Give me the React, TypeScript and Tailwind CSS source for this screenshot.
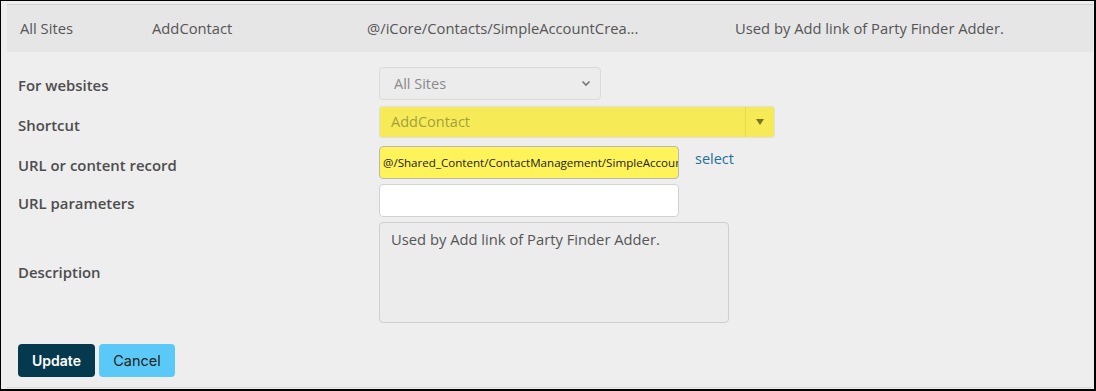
export default function App() {
  const label = "w-[361px] shrink-0 text-[14.9px] font-semibold text-[#4d4d4d]";
  return (
    <div
      className="w-[1096px] h-[391px] overflow-hidden border-l border-t border-b-2 border-r-2 border-black bg-[#eeeeee] pl-[6px] pr-[1px] pt-[3px] flex flex-col"
      style={{ fontFamily: '"Open Sans", "Liberation Sans", sans-serif' }}
    >
      {/* summary row */}
      <div className="h-[48px] shrink-0 border-t border-[#cfcfcf] bg-[#e6e6e6] flex items-center text-[14.75px] text-[#555]">
        <span className="w-[145px] pl-[13px]">All Sites</span>
        <span className="w-[215px]">AddContact</span>
        <span className="w-[368px]">@/iCore/Contacts/SimpleAccountCrea...</span>
        <span>Used by Add link of Party Finder Adder.</span>
      </div>

      {/* form */}
      <div className="flex flex-col pl-[11px] pt-[15px]">
        <div className="flex items-center h-[33px]">
          <span className={label + " pt-[4px]"}>For websites</span>
          <div className="w-[222px] h-[33px] rounded-[4px] border border-[#d9d9d9] bg-[#ececec] flex items-center justify-between pl-[14px] pr-[9px] text-[14.5px] text-[#8a8a8a]">
            <span>All Sites</span>
            <svg width="10" height="7" viewBox="0 0 10 7" fill="none" stroke="#777" strokeWidth="1.6">
              <polyline points="1.5,1.5 5,5 8.5,1.5" />
            </svg>
          </div>
        </div>

        <div className="flex items-center h-[32px] mt-[6px]">
          <span className={label + " pt-[6px]"}>Shortcut</span>
          <div className="w-[396px] h-[32px] rounded-[3px] border border-[#e0e0e0] bg-[#f6eb57] flex items-center text-[14.5px] text-[#a59f3e]">
            <span className="flex-1 pl-[11px]">AddContact</span>
            <span className="w-[29px] h-full border-l border-[#e3d84f] flex items-center justify-center">
              <svg width="8" height="6" viewBox="0 0 8 6">
                <polygon points="0,0 8,0 4,6" fill="#7a7420" />
              </svg>
            </span>
          </div>
        </div>

        <div className="flex items-center h-[33px] mt-[8px]">
          <span className={label + " pt-[5px]"}>URL or content record</span>
          <input
            readOnly
            value="@/Shared_Content/ContactManagement/SimpleAccountCreator"
            className="w-[300px] h-[33px] rounded-[4px] border border-[#b9b9b9] bg-[#fff35a] pl-[3px] text-[11.6px] text-[#222] outline-none"
          />
          <span className="ml-[16px] text-[14.5px] text-[#1f6f99] -mt-[7px]">select</span>
        </div>

        <div className="flex items-center h-[33px] mt-[5px]">
          <span className={label + " pt-[5px]"}>URL parameters</span>
          <div className="w-[300px] h-[33px] rounded-[4px] border border-[#d2d2d2] bg-white" />
        </div>

        <div className="flex items-center h-[101px] mt-[5px]">
          <span className={label}>Description</span>
          <div className="w-[350px] h-[101px] rounded-[4px] border border-[#cfcfcf] bg-[#ececec] pl-[11px] pt-[5px] text-[14.75px] text-[#555]">
            Used by Add link of Party Finder Adder.
          </div>
        </div>

        <div className="flex gap-[4px] mt-[21px]" style={{ fontFamily: "Inter, sans-serif" }}>
          <button className="w-[77px] h-[33px] rounded-[4px] bg-[#053a4e] text-white text-[14px] font-semibold">
            Update
          </button>
          <button className="w-[76px] h-[33px] rounded-[4px] bg-[#5bc9f7] text-[#222] text-[14.5px]">
            Cancel
          </button>
        </div>
      </div>
      <div className="mt-auto mb-[1px] mr-[2px] border-b border-[#d8d8d8]" />
    </div>
  );
}
